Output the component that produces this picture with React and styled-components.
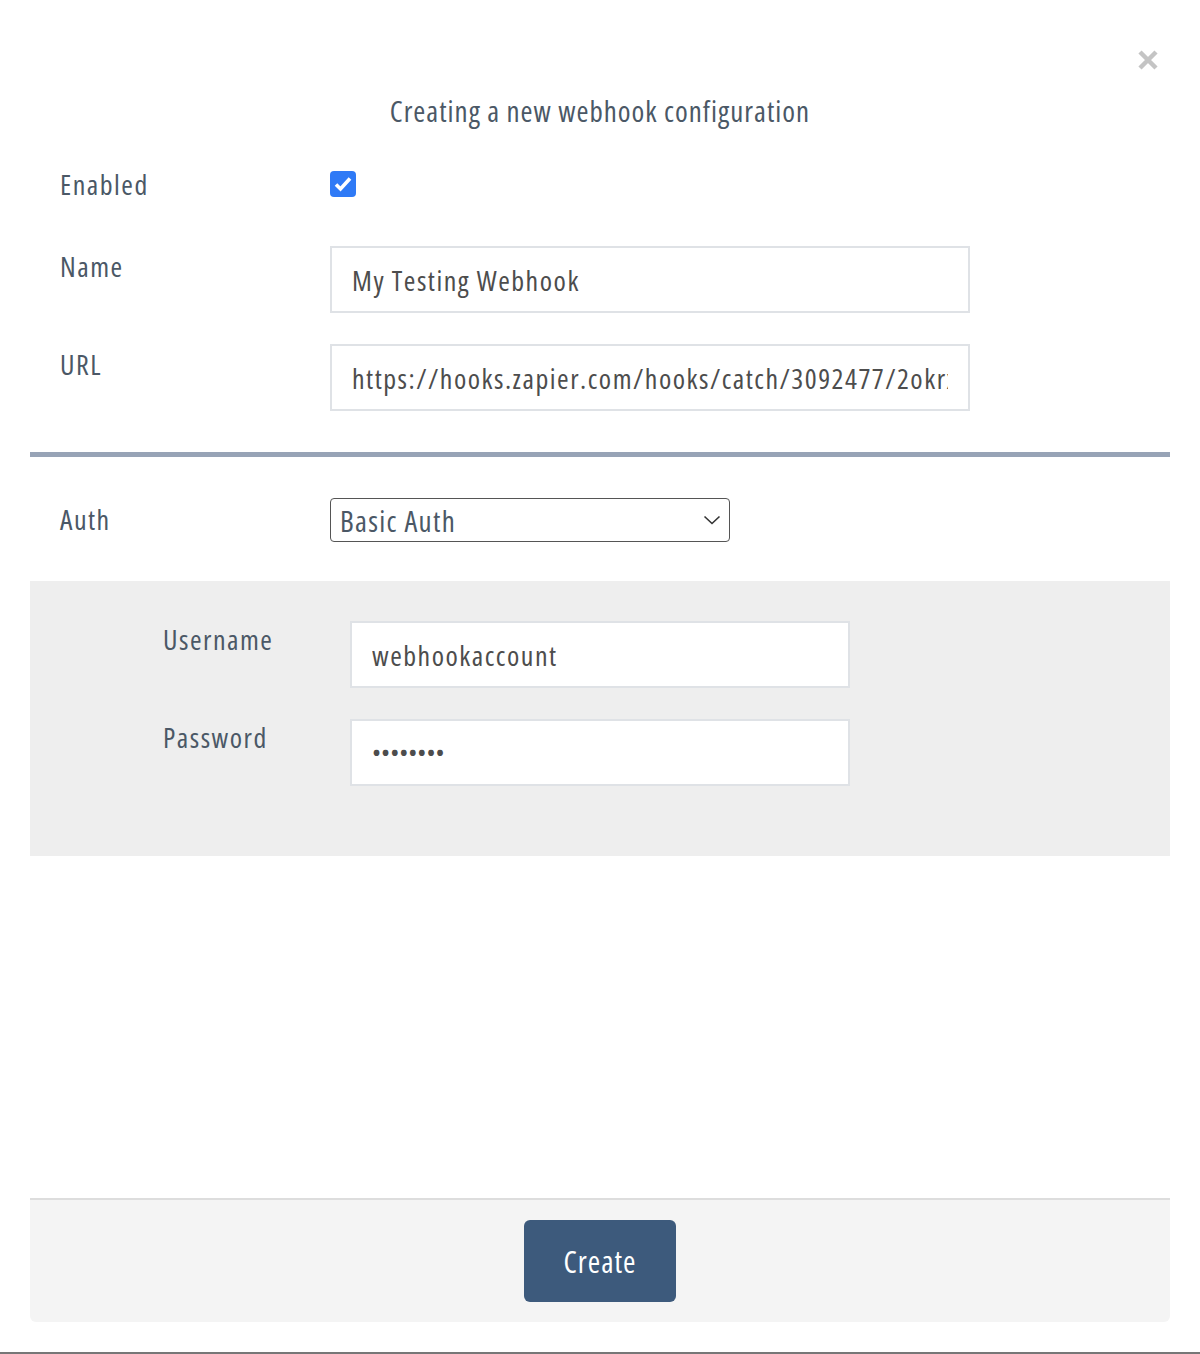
import React from "react"
import styled, { createGlobalStyle } from "styled-components"

const GlobalStyle = createGlobalStyle`
  html, body {
    margin: 0;
    padding: 0;
    background: #ffffff;
  }
  body {
    font-family: "Open Sans", "Lato", "Liberation Sans", sans-serif;
    font-stretch: 75%;
    color: #4b5866;
  }
  * {
    box-sizing: border-box;
  }
`

function App() {
  return (
    <>
      <GlobalStyle />
      <Page>
        <Modal>
          <CloseButton aria-label="Close">
            <svg width="22" height="22" viewBox="0 0 22 22">
              <path d="M3 3 L19 19 M19 3 L3 19" stroke="#c4c4c4" strokeWidth="4.5" strokeLinecap="butt" />
            </svg>
          </CloseButton>
          <Title>Creating a new webhook configuration</Title>

          <Body>
            <Row $align="center" $mt={34}>
              <Label>Enabled</Label>
              <CheckBox>
                <svg width="18" height="16" viewBox="0 0 18 16">
                  <path d="M2 8.5 L6.5 13 L16 2.5" fill="none" stroke="#fff" strokeWidth="3.6" />
                </svg>
              </CheckBox>
            </Row>

            <Row $mt={44}>
              <Label $pt={2}>Name</Label>
              <TextInput readOnly value="My Testing Webhook" />
            </Row>

            <Row $mt={31}>
              <Label $pt={2}>URL</Label>
              <TextInput readOnly value="https://hooks.zapier.com/hooks/catch/3092477/2okrxxw/" />
            </Row>

            <Divider />

            <Row $align="center">
              <Label>Auth</Label>
              <Select>
                <span>Basic Auth</span>
                <svg width="18" height="10" viewBox="0 0 18 10">
                  <path d="M1.5 1.5 L9 8.5 L16.5 1.5" fill="none" stroke="#333" strokeWidth="1.6" />
                </svg>
              </Select>
            </Row>

            <AuthPanel>
              <SubRow>
                <Label $pt={0}>Username</Label>
                <TextInput $width={500} readOnly value="webhookaccount" />
              </SubRow>
              <SubRow>
                <Label $pt={0}>Password</Label>
                <TextInput $width={500} $password readOnly type="password" value="password" />
              </SubRow>
            </AuthPanel>
          </Body>

          <Footer>
            <CreateButton>Create</CreateButton>
          </Footer>
        </Modal>
        <BottomEdge />
      </Page>
    </>
  )
}

export default App

const Page = styled.div`
  width: 1200px;
  height: 1354px;
  display: flex;
  flex-direction: column;
`
const Modal = styled.div`
  position: relative;
  padding: 0 30px;
  display: flex;
  flex-direction: column;
`
const CloseButton = styled.button`
  position: absolute;
  top: 49px;
  right: 41px;
  border: none;
  background: none;
  padding: 0;
  display: flex;
  cursor: pointer;
`
const Title = styled.h4`
  margin: 90px 0 0;
  height: 42px;
  line-height: 42px;
  text-align: center;
  font-size: 29px;
  letter-spacing: 1px;
  font-weight: 400;
  color: #4b5866;
`
const Body = styled.div`
  height: 1066px;
  display: flex;
  flex-direction: column;
`
const Row = styled.div`
  display: grid;
  grid-template-columns: 270px auto;
  align-items: ${(p) => (p.$align === "center" ? "center" : "start")};
  padding-left: 30px;
  margin-top: ${(p) => p.$mt || 0}px;
`
const Label = styled.label`
  font-size: 28px;
  line-height: 36px;
  letter-spacing: 1.5px;
  padding-top: ${(p) => p.$pt || 0}px;
  color: #4b5866;
`
const CheckBox = styled.span`
  width: 26px;
  height: 26px;
  border-radius: 4px;
  background: #2f7af6;
  display: flex;
  align-items: center;
  justify-content: center;
`
const TextInput = styled.input`
  width: ${(p) => p.$width || 640}px;
  height: 67px;
  border: 2px solid #dfe2e6;
  border-radius: 0;
  background: #fff;
  padding: 0 20px;
  font-family: inherit;
  font-stretch: 75%;
  font-size: ${(p) => (p.$password ? 24 : 28)}px;
  letter-spacing: ${(p) => (p.$password ? "0" : "1.5px")};
  color: #4d4d4d;
  outline: none;
`
const Divider = styled.hr`
  margin: 41px 0 0;
  border: none;
  height: 5px;
  background: #97a3b6;
`
const Select = styled.div`
  margin: 41px 0 39px;
  width: 400px;
  height: 44px;
  border: 1.5px solid #555;
  border-radius: 4px;
  padding: 0 8px 0 9px;
  display: flex;
  align-items: center;
  justify-content: space-between;
  font-size: 29px;
  letter-spacing: 1.3px;
  color: #4b5866;
`
const AuthPanel = styled.div`
  background: #eeeeee;
  padding: 40px 0 70px 133px;
  display: flex;
  flex-direction: column;
  gap: 31px;
`
const SubRow = styled.div`
  display: grid;
  grid-template-columns: 187px auto;
  align-items: start;
`
const Footer = styled.div`
  height: 124px;
  border-top: 2px solid #dddddd;
  background: #f4f4f4;
  border-radius: 0 0 6px 6px;
  display: flex;
  align-items: center;
  justify-content: center;
`
const CreateButton = styled.button`
  width: 152px;
  height: 82px;
  border: none;
  border-radius: 6px;
  background: #3d5a7c;
  color: #ffffff;
  font-family: inherit;
  font-stretch: 75%;
  font-size: 30px;
  letter-spacing: 1px;
  cursor: pointer;
`
const BottomEdge = styled.div`
  margin-top: auto;
  height: 2px;
  background: #777777;
`
